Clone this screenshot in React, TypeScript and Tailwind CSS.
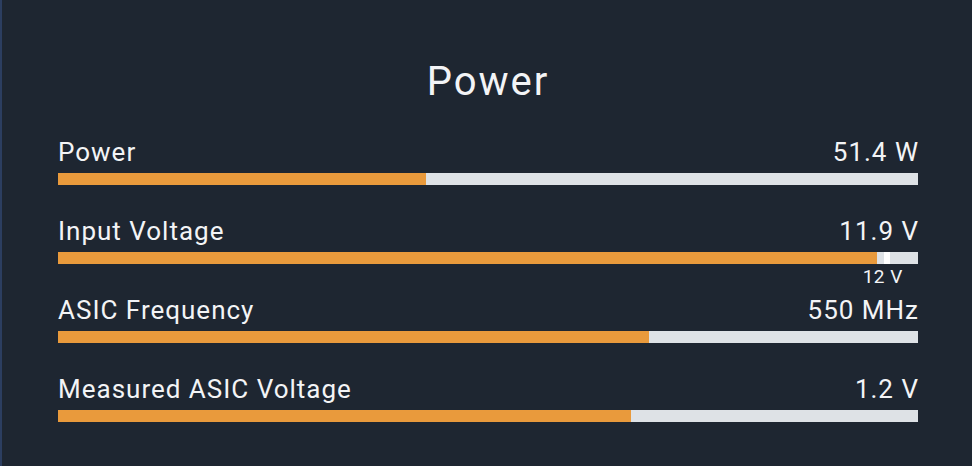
import React from "react";

type Metric = {
  label: string;
  value: string;
  pct: number;
  marker?: { pct: number; label: string };
};

const metrics: Metric[] = [
  { label: "Power", value: "51.4 W", pct: 42.8 },
  { label: "Input Voltage", value: "11.9 V", pct: 95.2, marker: { pct: 96.4, label: "12 V" } },
  { label: "ASIC Frequency", value: "550 MHz", pct: 68.7 },
  { label: "Measured ASIC Voltage", value: "1.2 V", pct: 66.6 },
];

function MetricRow({ m }: { m: Metric }) {
  return (
    <div className="flex flex-col">
      <div className="flex items-baseline justify-between text-[26px] leading-[24px] tracking-[1px] text-[#f3f4f6]">
        <span>{m.label}</span>
        <span className="-mr-[1px]">{m.value}</span>
      </div>
      <div className="relative mt-[9px] h-[12px] w-full bg-[#dee2e6]">
        <div className="h-full bg-[#e99a3c]" style={{ width: `${m.pct}%` }} />
        {m.marker && (
          <>
            <div
              className="absolute top-0 h-full w-[6px] -translate-x-1/2 bg-white"
              style={{ left: `${m.marker.pct}%` }}
            />
            <div
              className="absolute top-[16px] -translate-x-1/2 whitespace-nowrap text-[19px] leading-[18px] tracking-[0.5px] text-[#f3f4f6]"
              style={{ left: `${m.marker.pct - 0.5}%` }}
            >
              {m.marker.label}
            </div>
          </>
        )}
      </div>
    </div>
  );
}

export default function App() {
  return (
    <div
      className="flex h-[466px] w-[972px] flex-col border-l-2 border-[#2c3e60] bg-[#1e2631] pl-[56px] pr-[54px] pt-[62px]"
      style={{ fontFamily: "Roboto, 'Liberation Sans', sans-serif" }}
    >
      <h2 className="text-center text-[40px] leading-[40px] tracking-[2px] text-[#f3f4f6]">Power</h2>
      <div className="mt-[38px] flex flex-col gap-[34px]">
        {metrics.map((m) => (
          <MetricRow key={m.label} m={m} />
        ))}
      </div>
    </div>
  );
}
